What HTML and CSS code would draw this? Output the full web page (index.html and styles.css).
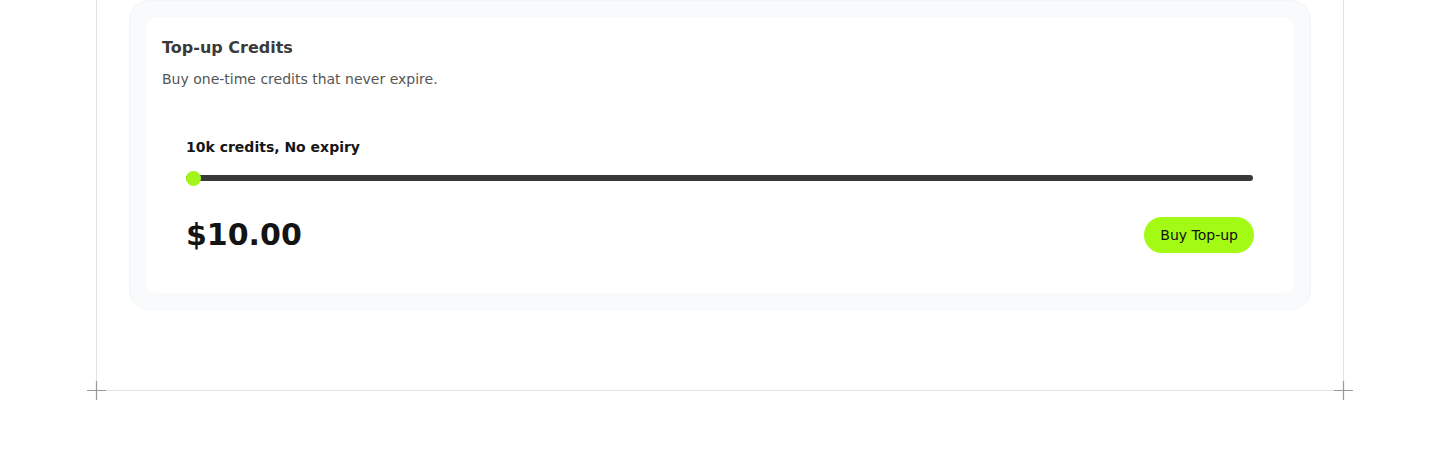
FILE: index.html
```html
<!DOCTYPE html>
<html>
<head>
<meta charset="utf-8">
<link rel="stylesheet" href="styles.css">
</head>
<body>
<div class="frame">
  <div class="outer-card">
    <div class="inner-card">
      <h2 class="title">Top-up Credits</h2>
      <p class="desc">Buy one-time credits that never expire.</p>
      <div class="topup">
        <div class="label">10k credits, No expiry</div>
        <div class="slider">
          <div class="track"></div>
          <div class="thumb"></div>
        </div>
        <div class="price-row">
          <div class="price">$10.00</div>
          <button class="buy">Buy Top-up</button>
        </div>
      </div>
    </div>
  </div>
  <svg class="cross cross-left" width="19" height="19" viewBox="0 0 19 19"><path d="M0 9.5H19M9.5 0V19" stroke="#999" stroke-width="1.2"/></svg>
  <svg class="cross cross-right" width="19" height="19" viewBox="0 0 19 19"><path d="M0 9.5H19M9.5 0V19" stroke="#999" stroke-width="1.2"/></svg>
</div>
</body>
</html>
```
FILE: styles.css
```css
* { box-sizing: border-box; }
html, body { margin: 0; padding: 0; background: #fff; }
body { font-family: "DejaVu Sans", sans-serif; min-height: 463px; }

.frame {
  position: relative;
  margin-left: 96px;
  width: 1248px;
  height: 391px;
  border-left: 1px solid #e4e4e4;
  border-right: 1px solid #e4e4e4;
  border-bottom: 1px solid #e4e4e4;
  padding: 0 32px;
}

.outer-card {
  background: #f8fafb;
  border: 1px solid #f2f4f6;
  border-radius: 20px;
  padding: 16px;
}

.inner-card {
  background: #fff;
  border-radius: 12px;
  padding: 18px 16px 16px;
}

.title {
  margin: 0;
  font-size: 16px;
  line-height: 26px;
  font-weight: bold;
  color: #3a3a3a;
}

.desc {
  margin: 8px 0 0;
  font-size: 14px;
  line-height: 20px;
  color: #555;
}

.topup {
  margin-top: 24px;
  padding: 24px 24px 24px;
}

.label {
  font-size: 14px;
  line-height: 20px;
  font-weight: bold;
  color: #161616;
}

.slider {
  position: relative;
  margin-top: 12px;
  height: 18px;
}

.track {
  position: absolute;
  left: 0;
  right: 1px;
  top: 6px;
  height: 6px;
  border-radius: 3px;
  background: #393939;
}

.thumb {
  position: absolute;
  left: 0;
  top: 1.5px;
  width: 15px;
  height: 15px;
  border-radius: 50%;
  background: #a2f51a;
}

.price-row {
  margin-top: 30px;
  display: flex;
  align-items: center;
  justify-content: space-between;
}

.price {
  font-size: 30px;
  line-height: 36px;
  font-weight: bold;
  color: #141414;
}

.buy {
  height: 36px;
  padding: 0 16px;
  border: none;
  border-radius: 18px;
  background: #a3fa14;
  color: #111;
  font-family: "DejaVu Sans", sans-serif;
  font-size: 14px;
}

.cross {
  position: absolute;
  bottom: -10px;
  display: block;
}
.cross-left { left: -10px; }
.cross-right { right: -10px; }
```
